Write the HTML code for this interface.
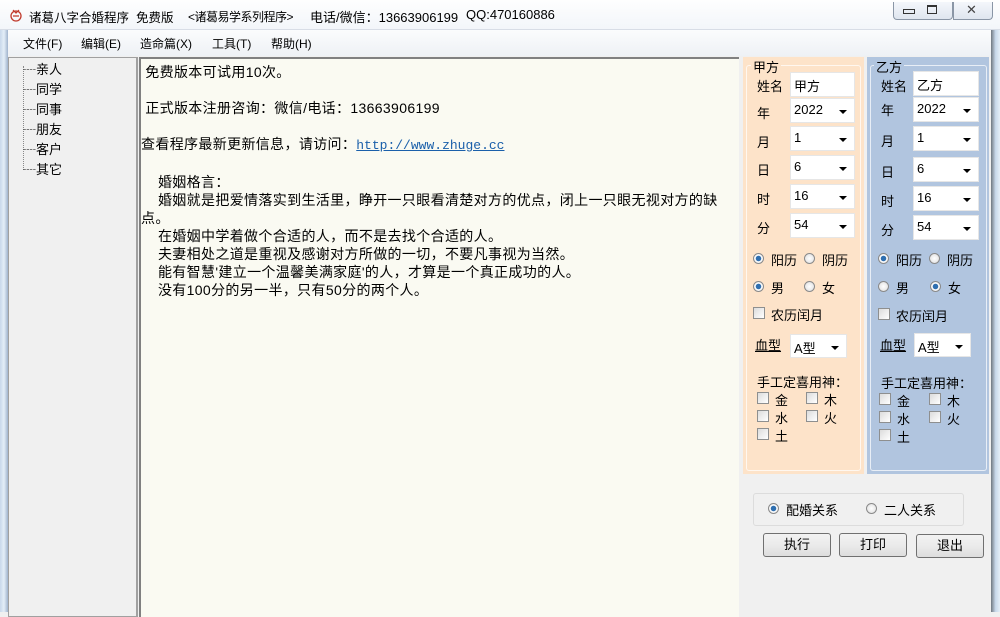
<!DOCTYPE html>
<html><head><meta charset="utf-8">
<style>
*{margin:0;padding:0;box-sizing:border-box}
body{width:1000px;height:612px;overflow:hidden;background:#f0f0f0;font-family:"Liberation Sans","Noto Sans CJK SC",sans-serif;font-size:12px;color:#000;position:relative}
.a{position:absolute}
.title{left:0;top:0;width:1000px;height:30px;background:linear-gradient(#fefefe,#f3f6fa);border-bottom:1px solid #d8dde6}
.menu{left:8px;top:30px;width:983px;height:26px;background:linear-gradient(#fbfcfd,#eef1f5)}
.lb{left:0;top:30px;width:8px;height:582px;background:linear-gradient(90deg,#c8d8ea,#e4eef8,#9fb3cc)}
.rb{left:991px;top:30px;width:9px;height:582px;background:linear-gradient(90deg,#6f7780,#c8d8ea,#e4eef8)}
.tree{left:8px;top:57px;width:130px;height:560px;background:#f0f0f0;border:1px solid #a0a0a0;border-right:2px solid #a0a0a0}
.txt{left:139px;top:57px;width:600px;height:560px;background:#fafaf2;border-left:2px solid #808080;border-top:2px solid #808080;font-size:14px;line-height:18px;white-space:pre;padding-top:4px;letter-spacing:0.35px}
.peach{left:743px;top:57px;width:121px;height:417px;background:#fde3c9}
.blue{left:867px;top:57px;width:122px;height:417px;background:#b1c5df}
.gb{border:1px solid rgba(255,255,255,.7);border-radius:3px}
.in{background:#fff;border:1px solid #e6e6e6;height:25px;font-size:13px;padding:3px 0 0 3px}
.sel::after{content:"";position:absolute;right:7px;top:11px;border-left:4px solid transparent;border-right:4px solid transparent;border-top:4px solid #000}
.rd{width:11px;height:11px;border-radius:50%;border:1px solid #8a8a8a;background:radial-gradient(#fff,#dcdcdc)}
.rd.on{background:radial-gradient(#2f6fb0 0 2.5px,#fff 3px,#e0e0e0)}
.cb{width:12px;height:12px;border:1px solid #8e8f8f;background:linear-gradient(135deg,#dcdcdc,#fff)}
.btn{height:24px;width:68px;border:1px solid #707070;border-radius:3px;background:linear-gradient(#f2f2f2,#ebebeb 50%,#dddddd);text-align:center;line-height:22px;font-size:13px}
.t{font-size:13px;white-space:pre}
.s{font-size:12px;white-space:pre}
</style></head><body>
<div class="a title"></div>
<svg class="a" style="left:8px;top:7px" width="16" height="16" viewBox="0 0 16 16"><circle cx="8" cy="9" r="5" fill="none" stroke="#c0392b" stroke-width="1.3"/><path d="M5 3 L8 6 L11 3 M5 9 h6" stroke="#c0392b" stroke-width="1.2" fill="none"/></svg>
<div class="a t" style="left:29px;top:7px;font-size:12.5px">诸葛八字合婚程序  免费版</div>
<div class="a s" style="left:188px;top:8px;letter-spacing:-0.5px">&lt;诸葛易学系列程序&gt;</div>
<div class="a t" style="left:310px;top:7px">电话/微信：13663906199</div>
<div class="a t" style="left:466px;top:7px">QQ:470160886</div>
<div class="a" style="left:893px;top:2px;width:60px;height:18px;border:1px solid #8a96a6;border-top:none;border-radius:0 0 4px 4px;background:linear-gradient(#f4f7fb,#dfe6ef)"></div>
<div class="a" style="left:953px;top:2px;width:40px;height:18px;border:1px solid #8a96a6;border-top:none;border-radius:0 0 4px 0;background:linear-gradient(#f4f7fb,#dfe6ef)"></div>
<div class="a" style="left:903px;top:9px;width:12px;height:5px;border:1px solid #333"></div>
<div class="a" style="left:927px;top:5px;width:10px;height:9px;border:1px solid #333;border-top-width:2px"></div>
<div class="a" style="left:966px;top:2px;font-size:13px;color:#444">✕</div>
<div class="a lb"></div><div class="a rb"></div>
<div class="a menu"></div>
<div class="a s" style="left:23px;top:35px">文件(F)</div>
<div class="a s" style="left:81px;top:35px">编辑(E)</div>
<div class="a s" style="left:140px;top:35px">造命篇(X)</div>
<div class="a s" style="left:212px;top:35px">工具(T)</div>
<div class="a s" style="left:271px;top:35px">帮助(H)</div>
<div class="a tree">
 <div class="a" style="left:14px;top:8px;width:1px;height:104px;border-left:1px dotted #888"></div>
 <div class="a t" style="left:14px;top:2px;line-height:20px">┈亲人
┈同学
┈同事
┈朋友
┈客户
┈其它</div>
</div>
<div class="a txt"> 免费版本可试用10次。

 正式版本注册咨询：微信/电话：13663906199

查看程序最新更新信息，请访问：<span style="color:#1a5faa;text-decoration:underline;font-family:'Liberation Mono',monospace;font-size:13px;letter-spacing:0">http://www.zhuge.cc</span>

    婚姻格言：
    婚姻就是把爱情落实到生活里，睁开一只眼看清楚对方的优点，闭上一只眼无视对方的缺
点。
    在婚姻中学着做个合适的人，而不是去找个合适的人。
    夫妻相处之道是重视及感谢对方所做的一切，不要凡事视为当然。
    能有智慧'建立一个温馨美满家庭'的人，才算是一个真正成功的人。
    没有100分的另一半，只有50分的两个人。</div>

<div class="a peach"></div><div class="a blue"></div>
<div class="a gb" style="left:746px;top:65px;width:115px;height:406px"></div>
<div class="a gb" style="left:870px;top:65px;width:117px;height:406px"></div>
<div class="a t" style="left:751px;top:57px;background:#fde3c9;padding:0 2px">甲方</div>
<div class="a t" style="left:874px;top:57px;background:#b1c5df;padding:0 2px">乙方</div>

<div class="a t" style="left:757px;top:76px">姓名</div>
<div class="a in" style="left:790px;top:72px;width:65px">甲方</div>
<div class="a t" style="left:757px;top:103px">年</div><div class="a in sel" style="left:790px;top:98px;width:65px">2022</div>
<div class="a t" style="left:757px;top:132px">月</div><div class="a in sel" style="left:790px;top:126px;width:65px">1</div>
<div class="a t" style="left:757px;top:160px">日</div><div class="a in sel" style="left:790px;top:155px;width:65px">6</div>
<div class="a t" style="left:757px;top:189px">时</div><div class="a in sel" style="left:790px;top:184px;width:65px">16</div>
<div class="a t" style="left:757px;top:218px">分</div><div class="a in sel" style="left:790px;top:213px;width:65px">54</div>
<div class="a rd on" style="left:753px;top:253px"></div><div class="a t" style="left:771px;top:250px">阳历</div>
<div class="a rd" style="left:804px;top:253px"></div><div class="a t" style="left:822px;top:250px">阴历</div>
<div class="a rd on" style="left:753px;top:281px"></div><div class="a t" style="left:771px;top:278px">男</div>
<div class="a rd" style="left:804px;top:281px"></div><div class="a t" style="left:822px;top:278px">女</div>
<div class="a cb" style="left:753px;top:307px"></div><div class="a t" style="left:771px;top:305px">农历闰月</div>
<div class="a t" style="left:755px;top:335px;text-decoration:underline">血型</div>
<div class="a in sel" style="left:790px;top:334px;width:57px;height:24px">A型</div>
<div class="a t" style="left:757px;top:372px">手工定喜用神：</div>
<div class="a cb" style="left:757px;top:392px"></div><div class="a t" style="left:775px;top:390px">金</div>
<div class="a cb" style="left:806px;top:392px"></div><div class="a t" style="left:824px;top:390px">木</div>
<div class="a cb" style="left:757px;top:410px"></div><div class="a t" style="left:775px;top:408px">水</div>
<div class="a cb" style="left:806px;top:410px"></div><div class="a t" style="left:824px;top:408px">火</div>
<div class="a cb" style="left:757px;top:428px"></div><div class="a t" style="left:775px;top:426px">土</div>

<div class="a t" style="left:881px;top:76px">姓名</div>
<div class="a in" style="left:913px;top:71px;width:66px">乙方</div>
<div class="a t" style="left:881px;top:100px">年</div><div class="a in sel" style="left:913px;top:97px;width:66px">2022</div>
<div class="a t" style="left:881px;top:131px">月</div><div class="a in sel" style="left:913px;top:126px;width:66px">1</div>
<div class="a t" style="left:881px;top:162px">日</div><div class="a in sel" style="left:913px;top:157px;width:66px">6</div>
<div class="a t" style="left:881px;top:191px">时</div><div class="a in sel" style="left:913px;top:186px;width:66px">16</div>
<div class="a t" style="left:881px;top:220px">分</div><div class="a in sel" style="left:913px;top:215px;width:66px">54</div>
<div class="a rd on" style="left:878px;top:253px"></div><div class="a t" style="left:896px;top:250px">阳历</div>
<div class="a rd" style="left:929px;top:253px"></div><div class="a t" style="left:947px;top:250px">阴历</div>
<div class="a rd" style="left:878px;top:281px"></div><div class="a t" style="left:896px;top:278px">男</div>
<div class="a rd on" style="left:930px;top:281px"></div><div class="a t" style="left:948px;top:278px">女</div>
<div class="a cb" style="left:878px;top:308px"></div><div class="a t" style="left:896px;top:306px">农历闰月</div>
<div class="a t" style="left:880px;top:335px;text-decoration:underline">血型</div>
<div class="a in sel" style="left:914px;top:333px;width:57px;height:24px">A型</div>
<div class="a t" style="left:881px;top:373px">手工定喜用神：</div>
<div class="a cb" style="left:879px;top:393px"></div><div class="a t" style="left:897px;top:391px">金</div>
<div class="a cb" style="left:929px;top:393px"></div><div class="a t" style="left:947px;top:391px">木</div>
<div class="a cb" style="left:879px;top:411px"></div><div class="a t" style="left:897px;top:409px">水</div>
<div class="a cb" style="left:929px;top:411px"></div><div class="a t" style="left:947px;top:409px">火</div>
<div class="a cb" style="left:879px;top:429px"></div><div class="a t" style="left:897px;top:427px">土</div>

<div class="a" style="left:753px;top:493px;width:211px;height:33px;border:1px solid #dcdcdc;border-radius:3px"></div>
<div class="a rd on" style="left:768px;top:503px"></div><div class="a t" style="left:786px;top:500px">配婚关系</div>
<div class="a rd" style="left:866px;top:503px"></div><div class="a t" style="left:884px;top:500px">二人关系</div>
<div class="a btn" style="left:763px;top:533px">执行</div>
<div class="a btn" style="left:839px;top:533px">打印</div>
<div class="a btn" style="left:916px;top:534px">退出</div>
</body></html>
